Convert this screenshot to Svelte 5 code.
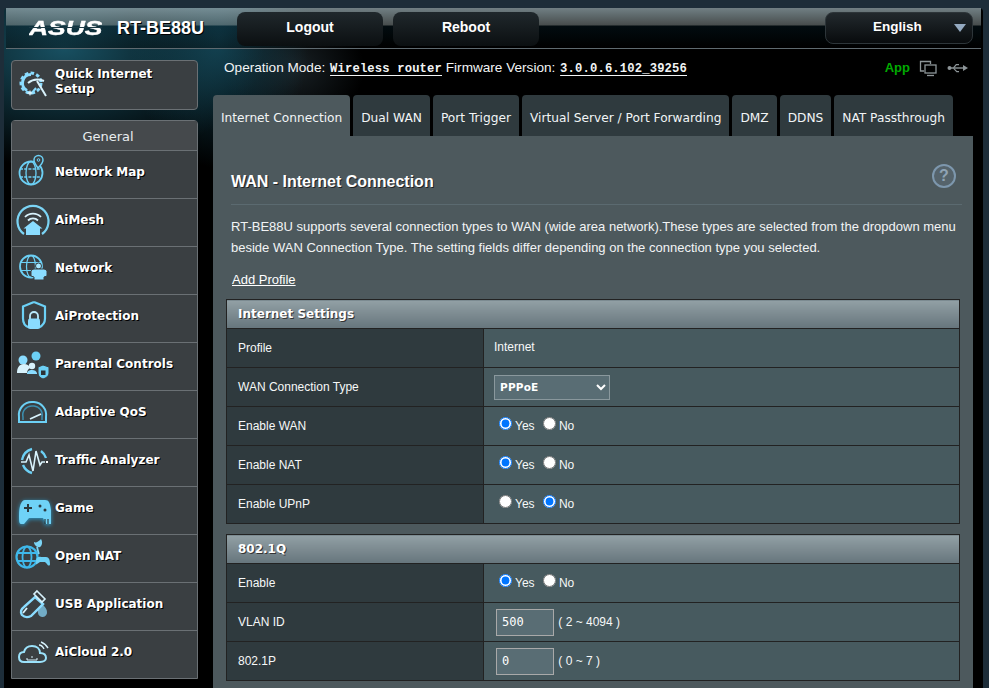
<script>
  const menu = ["Network Map", "AiMesh", "Network", "AiProtection", "Parental Controls", "Adaptive QoS", "Traffic Analyzer", "Game", "Open NAT", "USB Application", "AiCloud 2.0"];
  const tabs = ["Internet Connection", "Dual WAN", "Port Trigger", "Virtual Server / Port Forwarding", "DMZ", "DDNS", "NAT Passthrough"];
  const settings = [
    { label: "Enable WAN", name: "wan", value: "yes" },
    { label: "Enable NAT", name: "nat", value: "yes" },
    { label: "Enable UPnP", name: "upnp", value: "no" }
  ];
</script>

{#snippet yesno(name, value)}
  <label class="radio"><input type="radio" {name} checked={value === "yes"} />Yes</label>
  <label class="radio"><input type="radio" {name} checked={value === "no"} />No</label>
{/snippet}

{#snippet icon(name)}
  <svg class="icon" viewBox="0 0 43 40" fill="none" stroke="#6cd0f5" stroke-width="1.8">
    {#if name === "Network Map"}
      <circle cx="19" cy="18" r="11.500" />
      <ellipse cx="19" cy="18" rx="5" ry="11.500" stroke-width="1.300" />
      <path d="M8 14h22M8 22h22" stroke-width="1.300" stroke-dasharray="3 1.200" />
      <path d="M26 13c-3-4-4-6-4-8a4.500 4.500 0 0 1 9 0c0 2-2 5-5 8z" fill="#3a3f42" stroke-width="1.500" />
      <circle cx="26.500" cy="5" r="1.300" stroke-width="1" />
    {:else if name === "AiMesh"}
      <path d="M12 31a15.500 15.500 0 1 1 18 0" stroke-width="2.200" stroke="#7bd4f5" />
      <path d="M13 14a11 11 0 0 1 16 0M16 17.500a7 7 0 0 1 10 0" stroke="#d8f2fc" />
      <path d="M21 18l-9.500 7.500H14V32h14v-6.500h2.500z" fill="#8adcff" stroke="none" />
    {:else if name === "Network"}
      <circle cx="19" cy="15.500" r="11" />
      <ellipse cx="19" cy="15.500" rx="4.500" ry="11" stroke-width="1.200" />
      <path d="M8 11.500h22M8 19.500h22" stroke-width="1.200" />
      <circle cx="26.500" cy="15" r="3" fill="#a5e6fd" stroke="#3a3f42" stroke-width="1" />
      <path d="M19 25v-5c1-2 3-2 4-2h7c2 0 4 0 5 2v5l-3 1v3H22v-3z" fill="#8adcff" stroke="#3a3f42" stroke-width="1" />
    {:else if name === "AiProtection"}
      <path d="M22 3l11 4.500v12c0 5-4 8-6 9M22 3L11 7.500v12c0 5 3 8 6 9" stroke-width="2.200" />
      <path d="M18 20v-3a4 4 0 0 1 8 0v3" stroke="#b9e9fb" />
      <rect x="16" y="19.500" width="12" height="10.500" rx="2" fill="#8adcff" stroke="none" />
    {:else if name === "Parental Controls"}
      <circle cx="11" cy="13" r="4.500" fill="#8adcff" stroke="none" />
      <path d="M5 26c0-5 2-9 7-9 3 0 5 1 6 4-2 1-3 3-3 5z" fill="#d8f2fc" stroke="none" />
      <circle cx="24" cy="9" r="4.500" fill="#6cd0f5" stroke="none" />
      <circle cx="20" cy="19" r="3.200" fill="#d8f2fc" stroke="none" />
      <path d="M15 27c0-3 2-4 5-4s4 1 5 3v1z" fill="#8adcff" stroke="none" />
      <path d="M26 20l5-2 6 2v6c0 3-3 5-6 6-3-1-5-3-5-6z" fill="#6cd0f5" stroke="#3a3f42" stroke-width="1" />
      <rect x="29" y="23.500" width="4.500" height="4.500" fill="#2c3235" stroke="none" />
    {:else if name === "Adaptive QoS"}
      <path d="M7 27v-5a13 13 0 0 1 13-15h2a13 13 0 0 1 12 15v5z" stroke-width="2" />
      <path d="M11 25v-3a9 9 0 0 1 9-11h2a9 9 0 0 1 8 11v3" stroke="#3d8fb0" stroke-width="1.500" />
      <path d="M18 24l11-5" stroke="#d8f2fc" />
    {:else if name === "Traffic Analyzer"}
      <path d="M10 17a14 14 0 0 1 10-11M29 8a14 14 0 0 1 5 7M11 22a14 14 0 0 0 9 8" stroke-width="2.400" />
      <path d="M9 19h5l3-7 4 16 3-20 4 14 2-3h3" stroke="#d8f2fc" stroke-width="1.600" />
      <path d="M34 19h2" stroke="#fff" />
    {:else if name === "Game"}
      <g class="glow">
        <path d="M13 9h20c4 0 5 3 6 10v14h-5l-3-6H17l-5 6H9c-2 0-2-4-2-9 0-8 2-15 6-15z" fill="#6fd2f7" stroke="none" />
        <path d="M12 17h8M16 13v8" stroke="#2c3a40" stroke-width="2" />
        <circle cx="28" cy="15" r="1.500" fill="#2c3a40" stroke="none" />
        <circle cx="33" cy="19" r="1.500" fill="#2c3a40" stroke="none" />
        <path d="M33 28v5M36 28v5" stroke="#2c3a40" stroke-width="1.200" />
      </g>
    {:else if name === "Open NAT"}
      <circle cx="15" cy="18" r="10.500" stroke="#3fb8ea" stroke-width="2.200" />
      <ellipse cx="15" cy="18" rx="4.500" ry="10.500" stroke="#3fb8ea" />
      <path d="M5 14h20M5 22h20" stroke="#3fb8ea" />
      <path d="M22 3c2 1 4 0 7-3 2 3 1 7-1 8-3 1-6-2-6-5z" fill="#7bd4f5" stroke="none" />
      <path d="M24 23c0-4 2-6 5-5h5c3 0 4 3 4 7 0 2-2 2-3 0l-2-2h-5l-3 2c-1 1-1 0-1-2z" fill="#6cd0f5" stroke="none" />
      <path d="M25 8c1 3 1 5 2 7" stroke="#7bd4f5" />
    {:else if name === "USB Application"}
      <path d="M23 10l8 7-12 12c-4 2-7 1-9-1-2-3-1-6 2-8z" stroke="#8adcff" stroke-width="2.400" />
      <path d="M25 4l8 8-3 3-8-8z" stroke="#d8f2fc" fill="#3a3f42" stroke-width="1.600" />
      <path d="M15 21l-4 5" stroke="#d8f2fc" />
      <path d="M30 17c3 3 5 5 5 8a4.500 4.500 0 0 1-9 1c-1-3 1-6 4-9z" fill="#8adcff" stroke="none" opacity=".7" />
    {:else}
      <path d="M12 27c-3 0-5-2-5-5 0-3 2-5 5-5 1-4 4-6 8-6 5 0 8 3 8 7 4 0 6 2 6 5 0 2-2 4-6 4z" stroke-width="2" stroke="#9be2fb" />
      <path d="M15 23v2h10v-2M20 23v-2" stroke="#d8f2fc" stroke-width="1" />
      <path d="M27 10c2 0 4 2 5 4M29 7c3 1 5 3 7 6" stroke="#d8f2fc" stroke-width="1.400" />
    {/if}
  </svg>
{/snippet}

<div class="page">
  <div class="frame">
    <header>
      <div class="logo"><span class="asus">ASUS</span></div>
      <div class="model">RT-BE88U</div>
      <button class="hbtn">Logout</button>
      <button class="hbtn reboot">Reboot</button>
      <div class="lang">English<span class="caret"></span></div>
    </header>

    <div class="columns">
      <aside>
        <div class="quick">
          <svg class="qicon" viewBox="0 0 30 30" fill="none">
            <circle cx="12" cy="13" r="10" stroke="#8adcff" stroke-width="3" stroke-dasharray="3.500 2.300" />
            <path d="M12 4.500a8.500 8.500 0 0 0-4 16" stroke="#8adcff" stroke-width="3" />
            <path d="M9 13c5-4 11-4 16-2M18 11l9 15" stroke="#d8f2fc" stroke-width="2" />
            <path d="M17 18l-5 6" stroke="#8adcff" stroke-width="2" />
            <path d="M11 20l1 2 2 1-2 1-1 2-1-2-2-1 2-1z" fill="#d8f2fc" />
          </svg>
          <span>Quick Internet<br />Setup</span>
        </div>

        <nav>
          <div class="general">General</div>
          {#each menu as item}
            <div class="item">
              {@render icon(item)}
              <span>{item}</span>
            </div>
          {/each}
        </nav>
      </aside>

      <main>
        <div class="status">
          <div>
            Operation Mode: <u class="mono">Wireless router</u> Firmware Version: <u class="mono">3.0.0.6.102_39256</u>
          </div>
          <div class="status-icons">
            <span class="app">App</span>
            <svg width="19" height="18" viewBox="0 0 19 18" fill="none" stroke="#8d9598" stroke-width="1.300">
              <path d="M5 12H1.500V2.500h10V5" />
              <rect x="6" y="6" width="11" height="8" />
              <path d="M8 16.500h7" />
            </svg>
            <svg width="21" height="12" viewBox="0 0 21 12" fill="#8d9598">
              <circle cx="2.500" cy="6" r="2" />
              <path d="M2 5.300h14v1.400H2z" />
              <path d="M16 3l5 3-5 3z" />
              <path d="M6 5.500L9 2h3v1.200H9.500l-2.500 3zM7 6l3 3h2v1.200H9.500L6 6.500z" />
            </svg>
          </div>
        </div>

        <div class="tabs">
          {#each tabs as tab, i}
            <div class="tab" class:active={i === 0}>{tab}</div>
          {/each}
        </div>

        <section class="panel">
          <div class="title">
            <h1>WAN - Internet Connection</h1>
            <span class="help">?</span>
          </div>
          <p class="desc">RT-BE88U supports several connection types to WAN (wide area network).These types are selected from the dropdown menu beside WAN Connection Type. The setting fields differ depending on the connection type you selected.</p>
          <a class="add" href="#top">Add Profile</a>

          <table>
            <colgroup><col class="col-label" /><col /></colgroup>
            <thead><tr><th colspan="2">Internet Settings</th></tr></thead>
            <tbody>
              <tr><th>Profile</th><td class="plain">Internet</td></tr>
              <tr>
                <th>WAN Connection Type</th>
                <td><select><option>PPPoE</option></select></td>
              </tr>
              {#each settings as row}
                <tr><th>{row.label}</th><td>{@render yesno(row.name, row.value)}</td></tr>
              {/each}
            </tbody>
          </table>

          <table>
            <colgroup><col class="col-label" /><col /></colgroup>
            <thead><tr><th colspan="2">802.1Q</th></tr></thead>
            <tbody>
              <tr><th>Enable</th><td>{@render yesno("vlan", "yes")}</td></tr>
              <tr><th>VLAN ID</th><td><input class="num" value="500" /> <span class="hint">( 2 ~ 4094 )</span></td></tr>
              <tr><th>802.1P</th><td><input class="num" value="0" /> <span class="hint">( 0 ~ 7 )</span></td></tr>
            </tbody>
          </table>
        </section>
      </main>
    </div>
  </div>
</div>

<style>
  :global(body) {
    background: #1d2d39;
  }
  .page {
    height: 688px;
    overflow: hidden;
    padding-top: 8px;
    box-sizing: border-box;
    font-family: "Liberation Sans", Arial, sans-serif;
    color: #fff;
  }
  .frame {
    width: 979px;
    margin-left: 4px;
    height: 720px;
    border-radius: 4px 4px 0 0;
    background:
      radial-gradient(ellipse 90px 130px at 215px 30px, rgba(24, 84, 104, 0.75), transparent),
      radial-gradient(ellipse 200px 120px at 60px 40px, rgba(30, 100, 122, 0.8), transparent),
      radial-gradient(ellipse 70px 60px at 290px 60px, rgba(30, 40, 45, 0.8), transparent),
      #000;
    padding: 0 6px;
    box-sizing: border-box;
  }
  header {
    height: 36px;
    margin: 0 -4px 0 -4px;
    padding: 4px 8px 0 23px;
    display: flex;
    align-items: flex-start;
    border-bottom: 1px solid #5f6a70;
    background: linear-gradient(to bottom, rgba(150, 170, 176, 0.75) 0, rgba(130, 140, 140, 0.55) 17px, rgba(5, 30, 40, 0.4) 18px, rgba(0, 0, 0, 0.4) 100%);
  }
  .logo {
    width: 73px;
    margin-top: 6px;
    overflow: hidden;
    position: relative;
  }
  .asus {
    display: inline-block;
    font: italic bold 20px/20px "Liberation Sans", sans-serif;
    transform: scaleX(1.32);
    transform-origin: left;
    color: #fff;
    -webkit-text-stroke: 0.4px #fff;
  }
  .logo::after {
    content: "";
    position: absolute;
    left: 0;
    right: 0;
    top: 9px;
    height: 1px;
    background: #1c3a45;
  }
  .model {
    font: bold 18px/32px "Liberation Sans", sans-serif;
    margin-left: 15px;
    width: 120px;
    text-shadow: 1px 1px 0 #000;
  }
  .hbtn {
    width: 146px;
    height: 34px;
    border: 0;
    border-radius: 8px;
    background: linear-gradient(to bottom, #20282c, #0b0f11);
    color: #fff;
    font: bold 14px "Liberation Sans", sans-serif;
    padding: 0 0 4px;
  }
  .reboot {
    margin-left: 10px;
  }
  .lang {
    margin-left: auto;
    width: 148px;
    height: 32px;
    box-sizing: border-box;
    border: 1px solid #2d3539;
    border-radius: 8px;
    background: linear-gradient(to bottom, #22292d, #080b0d);
    font: bold 13.500px/28px "Liberation Sans", sans-serif;
    padding-left: 47px;
    position: relative;
  }
  .caret {
    position: absolute;
    right: 6px;
    top: 11px;
    width: 0;
    height: 0;
    border: 6px solid transparent;
    border-top: 8px solid #94a9c0;
    border-bottom: 0;
  }
  .columns {
    display: flex;
    align-items: flex-start;
    margin-top: 11px;
    padding-left: 1px;
  }
  aside {
    width: 187px;
    flex: none;
  }
  .quick {
    height: 50px;
    box-sizing: border-box;
    background: #3a3f42;
    border: 1px solid #6a7074;
    border-radius: 4px;
    display: flex;
    align-items: center;
    font: bold 12px/15px "DejaVu Sans", Verdana, sans-serif;
    text-shadow: 1px 1px 0 #000;
    padding-bottom: 6px;
  }
  .qicon {
    width: 30px;
    height: 30px;
    margin: 6px 6px 0 7px;
    flex: none;
  }
  nav {
    margin-top: 10px;
    background: #3a3f42;
    border: 1px solid #6a7074;
    border-radius: 4px 4px 0 0;
  }
  .general {
    height: 29px;
    font: 13px/31px "DejaVu Sans", Verdana, sans-serif;
    color: #e8ecee;
    padding-left: 7px;
    text-align: center;
    background: #45494c;
    border-bottom: 1px solid #6a7074;
  }
  .item {
    height: 47px;
    border-bottom: 1px solid #6a7074;
    display: flex;
    align-items: center;
    font: bold 12px "DejaVu Sans", Verdana, sans-serif;
    text-shadow: 1px 1px 0 #000;
  }
  .item span {
    margin-bottom: 5px;
  }
  .item:last-child {
    border-bottom: 0;
  }
  .icon {
    width: 43px;
    height: 40px;
    flex: none;
    overflow: visible;
  }
  .glow {
    filter: drop-shadow(0 1px 2px #2a9ccc);
  }
  main {
    width: 760px;
    margin-left: 15px;
    flex: none;
  }
  .status {
    display: flex;
    justify-content: space-between;
    align-items: center;
    height: 37px;
    padding: 0 5px 22px 11px;
    font-size: 13.600px;
    box-sizing: border-box;
    color: #f2f4f5;
  }
  .mono {
    margin-left: 1px;
    font: bold 12.200px "Liberation Mono", monospace;
    letter-spacing: 0.150px;
    text-shadow: 1px 1px 0 #000;
    text-underline-offset: 3px;
  }
  .status-icons {
    display: flex;
    align-items: center;
    gap: 9px;
  }
  .app {
    color: #0a0;
    font-weight: bold;
    font-size: 13px;
    margin-left: 2px;
  }
  .tabs {
    display: flex;
    gap: 3px;
    margin-top: -2px;
  }
  .tab {
    height: 41px;
    box-sizing: border-box;
    padding: 0 8px;
    background: #2f3a3e;
    border-radius: 4px 4px 0 0;
    font: 12.200px/47px "DejaVu Sans", Verdana, sans-serif;
    color: #f2f5f6;
    white-space: nowrap;
  }
  .tab.active {
    background: #4d595d;
  }
  .panel {
    background: #4d595d;
    padding: 0 13px;
    height: 560px;
  }
  .title {
    height: 69px;
    box-sizing: border-box;
    margin: 0 -2px 0 5px;
    padding: 36px 0 0;
    border-bottom: 1px solid #5b6a70;
    display: flex;
    justify-content: space-between;
    align-items: flex-start;
  }
  h1 {
    margin: 0;
    font: bold 16px/20px "Liberation Sans", sans-serif;
    text-shadow: 1px 1px 0 #222;
  }
  .help {
    width: 20px;
    height: 20px;
    margin: -8px 6px 0 0;
    border: 2px solid #7d97ad;
    border-radius: 50%;
    background: #55636b;
    color: #8fa3b5;
    font: bold 16px/20px "Liberation Sans", sans-serif;
    text-align: center;
  }
  .desc {
    margin: 11px 0 0 5px;
    font-size: 13px;
    line-height: 21px;
    color: #f2f4f5;
  }
  .add {
    display: block;
    margin: 14px 0 0 6px;
    font-size: 13px;
    line-height: 16px;
    color: #fff;
  }
  table {
    width: 734px;
    margin-top: 11px;
    border-collapse: collapse;
    table-layout: fixed;
    font-size: 12px;
  }
  table + table {
    margin-top: 10px;
  }
  .col-label {
    width: 257px;
  }
  thead th {
    height: 28px;
    padding: 0 0 0 11px;
    background: linear-gradient(to bottom, #92a0a5, #66757c);
    border: 1px solid #222;
    text-align: left;
    font: bold 12px "DejaVu Sans", Verdana, sans-serif;
    text-shadow: 1px 1px 0 #333;
  }
  tbody th {
    height: 38px;
    padding: 0 0 0 11px;
    background: #2f3a3e;
    border: 1px solid #222;
    text-align: left;
    font-weight: normal;
    color: #f6f8f8;
  }
  tbody td {
    background: #475a5f;
    border: 1px solid #222;
    padding: 0 0 0 10px;
    color: #f6f8f8;
  }
  tbody td.plain {
    padding-bottom: 2px;
  }
  .radio {
    margin-left: 5px;
    position: relative;
  }
  .radio input {
    margin: 0 3px 0 0;
    position: relative;
    top: -3px;
    vertical-align: middle;
  }
  select {
    width: 116px;
    height: 25px;
    background: #596d74;
    border: 1px solid #8a989d;
    color: #fff;
    font: bold 10.500px "DejaVu Sans", Verdana, sans-serif;
    letter-spacing: 0.200px;
    border-radius: 0;
    padding-left: 1px;
  }
  .num {
    width: 58px;
    height: 27px;
    box-sizing: border-box;
    margin: 0 0 0 2px;
    padding: 0 5px;
    background: #596d74;
    border: 1px solid #a9a9a9;
    color: #fff;
    font: 12px "DejaVu Sans Mono", monospace;
  }
  .hint {
    margin-left: 1px;
  }
</style>
